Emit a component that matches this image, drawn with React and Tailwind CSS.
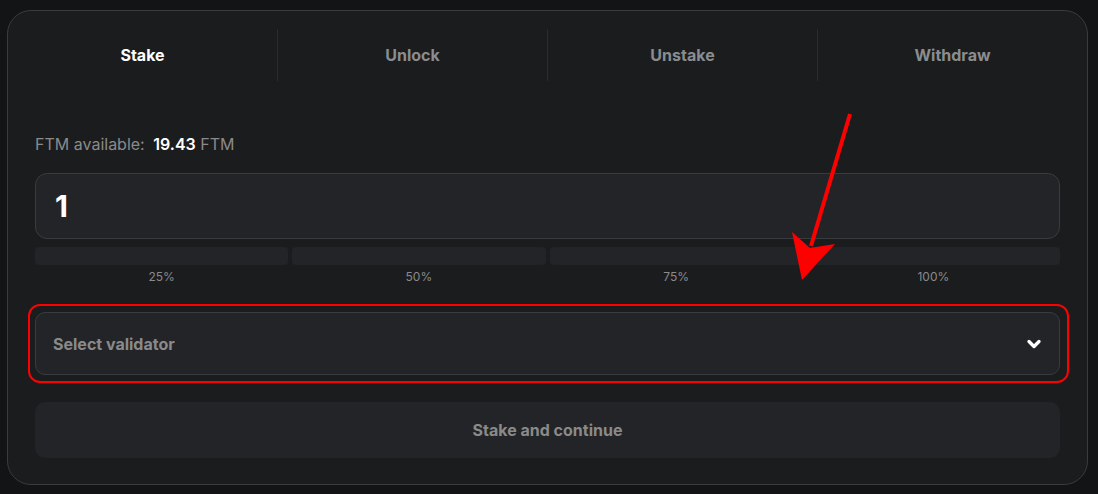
import React from "react";

export default function App() {
  const tabs = ["Stake", "Unlock", "Unstake", "Withdraw"];
  const pcts = ["25%", "50%", "75%", "100%"];
  return (
    <div
      className="relative w-[1098px] h-[494px] bg-[#131416] pt-[10px] px-[7px] overflow-hidden"
      style={{ fontFamily: "Inter, 'Noto Sans', sans-serif" }}
    >
      <div className="w-[1081px] h-[475px] rounded-[24px] border border-[#3a3b3e] bg-[#1b1c1e] flex flex-col">
        <div className="flex h-[70px] pt-[18px]">
          {tabs.map((t, i) => (
            <div
              key={t}
              className={`flex-1 flex items-center justify-center text-[16px] font-bold ${
                i === 0 ? "text-white" : "text-[#8a8d90]"
              } ${i > 0 ? "border-l border-[#2a2b2e]" : ""}`}
            >
              <span className="-mt-[1px]">{t}</span>
            </div>
          ))}
        </div>
        <div className="px-[27px] pt-[53px] flex flex-col">
          <div className="text-[16px] text-[#8a8a8a] leading-[20px]">
            FTM available:{" "}
            <span className="text-white font-semibold ml-[4px]">19.43</span> FTM
          </div>
          <div className="mt-[19px] h-[66px] rounded-[12px] border border-[#3a3b3f] bg-[#232427] flex items-center pl-[19px]">
            <span className="text-[30px] font-bold text-white">1</span>
          </div>
          <div className="mt-[8px] grid grid-cols-4 gap-[4px]">
            {pcts.map((p) => (
              <div key={p} className="flex flex-col items-center">
                <div className="w-full h-[18px] rounded-[4px] bg-[#232427]" />
                <span className="mt-[5px] text-[12px] text-[#8a8a8a] leading-[14px]">{p}</span>
              </div>
            ))}
          </div>
          <div className="mt-[20px] ml-[-7px] mr-[-9px] rounded-[12px] border-2 border-[#ff0000] py-[6px] pl-[5px] pr-[7px]">
            <div className="h-[63px] rounded-[10px] border border-[#3a3b3f] bg-[#232427] flex items-center justify-between pl-[17px] pr-[15px]">
              <span className="text-[16px] font-bold text-[#8a8a8a]">Select validator</span>
              <svg width="20" height="20" viewBox="0 0 24 24" fill="none" stroke="white" strokeWidth="4" strokeLinecap="round" strokeLinejoin="round">
                <path d="M6 9l6 6 6-6" />
              </svg>
            </div>
          </div>
          <div className="mt-[19px] h-[56px] rounded-[10px] bg-[#232427] flex items-center justify-center">
            <span className="text-[16px] font-bold text-[#8a8a8a]">Stake and continue</span>
          </div>
        </div>
      </div>
      <svg className="absolute left-0 top-0 pointer-events-none" width="1098" height="494">
        <line x1="850" y1="114" x2="811" y2="246" stroke="#ff0000" strokeWidth="4" />
        <polygon points="792,232 802,280 835,244 810,248" fill="#ff0000" />
      </svg>
    </div>
  );
}
